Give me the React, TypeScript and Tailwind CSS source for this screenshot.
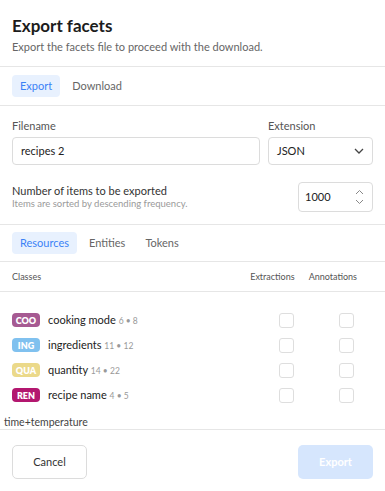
import React from "react";

const font = { fontFamily: "Lato, 'Noto Sans', sans-serif" };

function Badge({ code, color }: { code: string; color: string }) {
  return (
    <span
      className="inline-flex h-[14px] w-[28px] items-center justify-center rounded-[4px] text-[9px] font-extrabold leading-none text-white"
      style={{ backgroundColor: color }}
    >
      {code}
    </span>
  );
}

function Check() {
  return <span className="block h-[15px] w-[15px] rounded-[3px] border border-[#dedede] bg-white" />;
}

const rows = [
  { code: "COO", color: "#a65a92", name: "cooking mode", a: "6", b: "8" },
  { code: "ING", color: "#80c1ef", name: "ingredients", a: "11", b: "12" },
  { code: "QUA", color: "#ebd98a", name: "quantity", a: "14", b: "22" },
  { code: "REN", color: "#b3176f", name: "recipe name", a: "4", b: "5" },
];

export default function App() {
  return (
    <div className="flex h-[491px] w-[385px] flex-col bg-white text-[#222]" style={font}>
      <div className="px-3 pt-[15px] pb-[12px]">
        <h1 className="text-[17px] font-bold leading-[22px] text-[#1c1c1c]">Export facets</h1>
        <p className="mt-[3px] text-[11px] leading-[14px] text-[#666]">
          Export the facets file to proceed with the download.
        </p>
      </div>
      <div className="border-t border-[#e6e6e6]" />
      <div className="flex items-center gap-[4px] px-3 py-[8px]">
        <span className="rounded-[4px] bg-[#e8f1fe] px-[8px] py-[4px] text-[11px] leading-[14px] text-[#3b82f6]">Export</span>
        <span className="px-[8px] py-[4px] text-[11px] leading-[14px] text-[#666]">Download</span>
      </div>
      <div className="border-t border-[#e6e6e6]" />
      <div className="flex gap-[8px] px-3 pt-[13px]">
        <div className="flex flex-1 flex-col">
          <label className="text-[11px] leading-[14px] text-[#555]">Filename</label>
          <div className="mt-[4px] flex h-[28px] items-center rounded-[4px] border border-[#dcdcdc] px-[8px] text-[11px] text-[#222]">
            recipes 2
          </div>
        </div>
        <div className="flex w-[105px] flex-col">
          <label className="text-[11px] leading-[14px] text-[#555]">Extension</label>
          <div className="mt-[4px] flex h-[28px] items-center justify-between rounded-[4px] border border-[#dcdcdc] px-[8px] text-[11px] text-[#222]">
            <span>JSON</span>
            <svg width="10" height="6" viewBox="0 0 10 6" fill="none" stroke="#444" strokeWidth="1.3">
              <path d="M1 1l4 4 4-4" />
            </svg>
          </div>
        </div>
      </div>
      <div className="flex items-center justify-between px-3 pt-[17px] pb-[12px]">
        <div className="flex flex-col">
          <span className="text-[11px] leading-[14px] text-[#333]">Number of items to be exported</span>
          <span className="text-[9.5px] leading-[12px] text-[#9a9a9a]">Items are sorted by descending frequency.</span>
        </div>
        <div className="flex h-[30px] w-[75px] items-center justify-between rounded-[4px] border border-[#dcdcdc] pl-[6px] pr-[8px] text-[11px] text-[#222]">
          <span>1000</span>
          <svg width="9" height="16" viewBox="0 0 9 16" fill="none" stroke="#888" strokeWidth="1">
            <path d="M1 5l3.5-3.5L8 5M1 11l3.5 3.5L8 11" />
          </svg>
        </div>
      </div>
      <div className="border-t border-[#e6e6e6]" />
      <div className="flex items-center gap-[4px] px-3 py-[7px]">
        <span className="rounded-[4px] bg-[#e8f1fe] px-[8px] py-[4px] text-[11px] leading-[14px] text-[#3b82f6]">Resources</span>
        <span className="px-[8px] py-[4px] text-[11px] leading-[14px] text-[#666]">Entities</span>
        <span className="px-[8px] py-[4px] text-[11px] leading-[14px] text-[#666]">Tokens</span>
      </div>
      <div className="border-t border-[#e6e6e6]" />
      <div className="flex h-[29px] items-center pl-3 pr-[28px] text-[9px] leading-[14px] text-[#555]">
        <span className="flex-1">Classes</span>
        <span>Extractions</span>
        <span className="ml-[14px]">Annotations</span>
      </div>
      <div className="border-t border-[#e6e6e6]" />
      <div className="flex flex-col gap-[11px] pl-3 pt-[21px]">
        {rows.map((r) => (
          <div key={r.code} className="flex h-[14px] items-center">
            <div className="flex flex-1 items-center gap-[8px]">
              <Badge code={r.code} color={r.color} />
              <span className="text-[11px] text-[#222]">
                {r.name}{" "}
                <span className="text-[8.5px] text-[#999]">
                  {r.a} • {r.b}
                </span>
              </span>
            </div>
            <div className="flex w-[60px]"><Check /></div>
            <div className="flex w-[46px]"><Check /></div>
          </div>
        ))}
      </div>
      <div className="mt-[14px] px-[4px] text-[10.5px] leading-[13px] text-[#444]">time+temperature</div>
      <div className="border-t border-[#e6e6e6]" />
      <div className="flex items-center justify-between px-3 pt-[15px]">
        <button className="h-[34px] w-[75px] rounded-[5px] border border-[#dcdcdc] bg-white text-[11px] text-[#333]">Cancel</button>
        <button className="h-[34px] w-[75px] rounded-[5px] bg-[#d6e6fd] text-[11px] font-bold text-white">Export</button>
      </div>
    </div>
  );
}
